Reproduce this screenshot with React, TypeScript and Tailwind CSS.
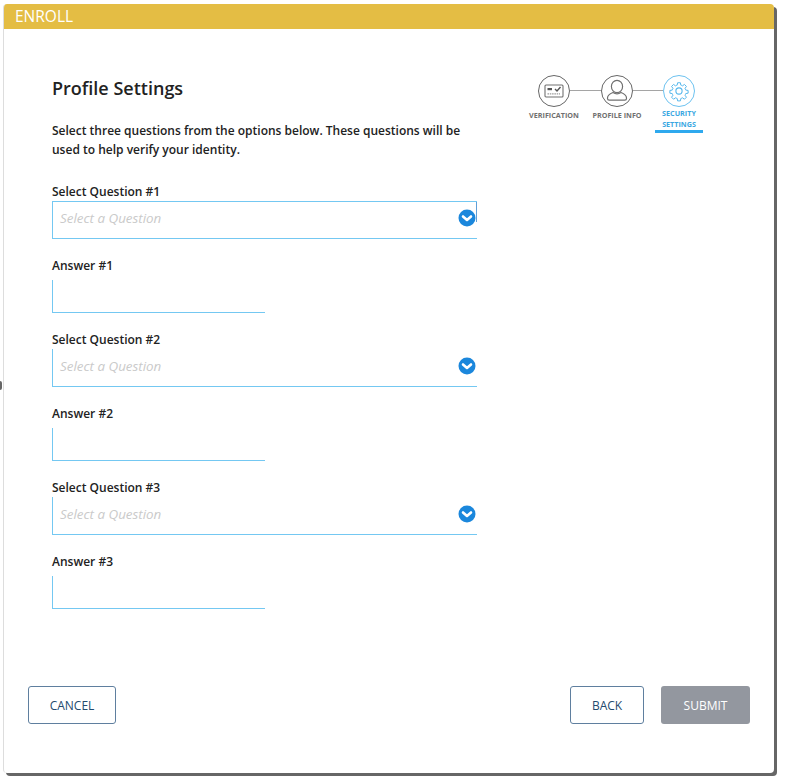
function Chevron({ first }: { first?: boolean }) {
  return (
    <svg width="18" height="18" viewBox="0 0 18 18" className={`absolute right-[1px] ${first ? "top-[7px]" : "top-[8px]"}`}>
      <circle cx="9" cy="9" r="8.5" fill="#1b87dc" />
      <path d="M5 7.5 L9 11 L13 7.5" fill="none" stroke="#fff" strokeWidth="2.6" strokeLinecap="round" strokeLinejoin="round" />
    </svg>
  );
}

function QuestionSelect({ n, first }: { n: number; first?: boolean }) {
  return (
    <div>
      <p className="pt-[1px] text-[12px] leading-[18px] font-semibold text-[#222]">Select Question #{n}</p>
      <div
        className={`relative flex h-[38px] w-[425px] items-center border-b border-l border-[#74c8f2] pl-[7px] ${
          first ? "border-t" : "pt-[1px]"
        }`}
      >
        <span className="-mt-[4px] text-[13.4px] font-medium text-[#cacaca] italic">Select a Question</span>
        {first && <div className="absolute top-0 right-0 h-[20px] w-px bg-[#5f9fd8]" />}
        <Chevron first={first} />
      </div>
    </div>
  );
}

function AnswerInput({ n }: { n: number }) {
  return (
    <div className="mt-[17px]">
      <p className="pt-[1px] text-[12px] leading-[18px] font-semibold text-[#222]">Answer #{n}</p>
      <div className="mt-[5px] h-[33px] w-[213px] border-b border-l border-[#74c8f2]" />
    </div>
  );
}

function Step({ label, active, children }: { label: string[]; active?: boolean; children: React.ReactNode }) {
  return (
    <div className="relative flex w-[32px] flex-col items-center">
      <div
        className={`flex size-[32px] shrink-0 items-center justify-center rounded-full border-[1.5px] bg-white ${
          active ? "border-[#6cc2f0]" : "border-[#666]"
        }`}
      >
        {children}
      </div>
      <div
        className={`w-[60px] text-center text-[7.2px] leading-[11px] font-bold whitespace-nowrap ${
          active ? "mt-[1px] text-[#3ba8e2]" : "mt-[3px] text-[#707070]"
        }`}
      >
        {label.map((l) => (
          <div key={l}>{l}</div>
        ))}
        {active && <div className="mx-auto h-[3px] w-[48px] bg-[#2fa9ee]" />}
      </div>
    </div>
  );
}

function Stepper() {
  return (
    <div className="flex items-start">
      <Step label={["VERIFICATION"]}>
        <svg width="20" height="14" viewBox="0 0 20 14" fill="none">
          <rect x="1" y="1" width="18" height="12" rx="1" stroke="#707070" strokeWidth="1.1" />
          <rect x="3.5" y="4" width="4.5" height="2.2" fill="#555" />
          <path d="M11 5 L13 7 L16.5 3" stroke="#555" strokeWidth="1.4" />
          <path d="M3.5 9.8 H16" stroke="#999" strokeWidth="1.2" strokeDasharray="1.5 0.8" />
        </svg>
      </Step>
      <div className="mt-[15px] h-px w-[31px] bg-[#a5a5a5]" />
      <Step label={["PROFILE INFO"]}>
        <svg width="26" height="26" viewBox="0 0 26 26" fill="none" stroke="#707070" strokeWidth="1.2">
          <ellipse cx="13" cy="8.5" rx="5.6" ry="6.2" />
          <path d="M3.5 20 C3.5 17 6.5 15.5 9 14.5 C11.5 16.2 14.5 16.2 17 14.5 C19.5 15.5 22.5 17 22.5 20 V20.5 C22.5 21.5 21.8 22.2 20.8 22.2 H5.2 C4.2 22.2 3.5 21.5 3.5 20.5 Z" />
        </svg>
      </Step>
      <div className="mt-[15px] h-px w-[30px] bg-[#a5a5a5]" />
      <Step label={["SECURITY", "SETTINGS"]} active>
        <svg width="22" height="22" viewBox="0 0 24 24" fill="none" stroke="#55b7ec" strokeWidth="1.2" strokeLinejoin="round">
          <circle cx="12" cy="12" r="3.4" />
          <path
            d="M10.3 2 h3.4 l.5 2.9 a7.5 7.5 0 0 1 2 .85 l2.4-1.7 2.4 2.4-1.7 2.4 a7.5 7.5 0 0 1 .85 2 l2.9.5 v3.3 l-2.9.5 a7.5 7.5 0 0 1-.85 2 l1.7 2.4-2.4 2.4-2.4-1.7 a7.5 7.5 0 0 1-2 .85 l-.5 2.9 h-3.4 l-.5-2.9 a7.5 7.5 0 0 1-2-.85 l-2.4 1.7-2.4-2.4 1.7-2.4 a7.5 7.5 0 0 1-.85-2 l-2.9-.5 v-3.3 l2.9-.5 a7.5 7.5 0 0 1 .85-2 l-1.7-2.4 2.4-2.4 2.4 1.7 a7.5 7.5 0 0 1 2-.85 z"
            transform="translate(1.2 1.2) scale(0.9)"
          />
        </svg>
      </Step>
    </div>
  );
}

export default function App() {
  return (
    <div className="relative h-[784px] w-[788px] bg-white pt-[4px] pl-[3px] font-['Open_Sans',sans-serif]">
      <div className="absolute top-[381px] left-0 h-[9px] w-[2px] rounded-r-full bg-[#666]" />
      <div className="flex h-[769px] w-[771px] flex-col overflow-hidden rounded-[4px] border-l border-[#ddd] bg-white shadow-[3px_3px_0_#666]">
        <div className="h-[25px] bg-[#e4bd44] pl-[11px] text-[15.5px] leading-[25px] text-white">ENROLL</div>

        <div className="flex flex-1 flex-col pr-[24px] pl-[48px]">
          <div className="flex items-start justify-between pt-[46px] pr-[55px]">
            <div className="w-[425px]">
              <h1 className="text-[18px] leading-[26px] font-semibold text-[#222]">Profile Settings</h1>
              <p className="mt-[20px] text-[12px] leading-[19px] font-semibold text-[#222]">
                Select three questions from the options below. These questions will be used to help verify your identity.
              </p>
            </div>
            <Stepper />
          </div>

          <div className="mt-[23px] flex flex-col gap-[17px]">
            {[1, 2, 3].map((n) => (
              <div key={n}>
                <QuestionSelect n={n} first={n === 1} />
                <AnswerInput n={n} />
              </div>
            ))}
          </div>

          <div className="mt-auto mb-[49px] -ml-[24px] flex items-center justify-between text-[12px] font-medium">
            <button className="h-[38px] w-[88px] rounded-[3px] border border-[#5f7f9f] pt-[1px] text-[#234a6e]">CANCEL</button>
            <div className="flex gap-[17px]">
              <button className="h-[38px] w-[74px] rounded-[3px] border border-[#5f7f9f] pt-[1px] text-[#234a6e]">BACK</button>
              <button className="h-[38px] w-[89px] rounded-[3px] bg-[#93979f] pt-[1px] text-white">SUBMIT</button>
            </div>
          </div>
        </div>
      </div>
    </div>
  );
}
